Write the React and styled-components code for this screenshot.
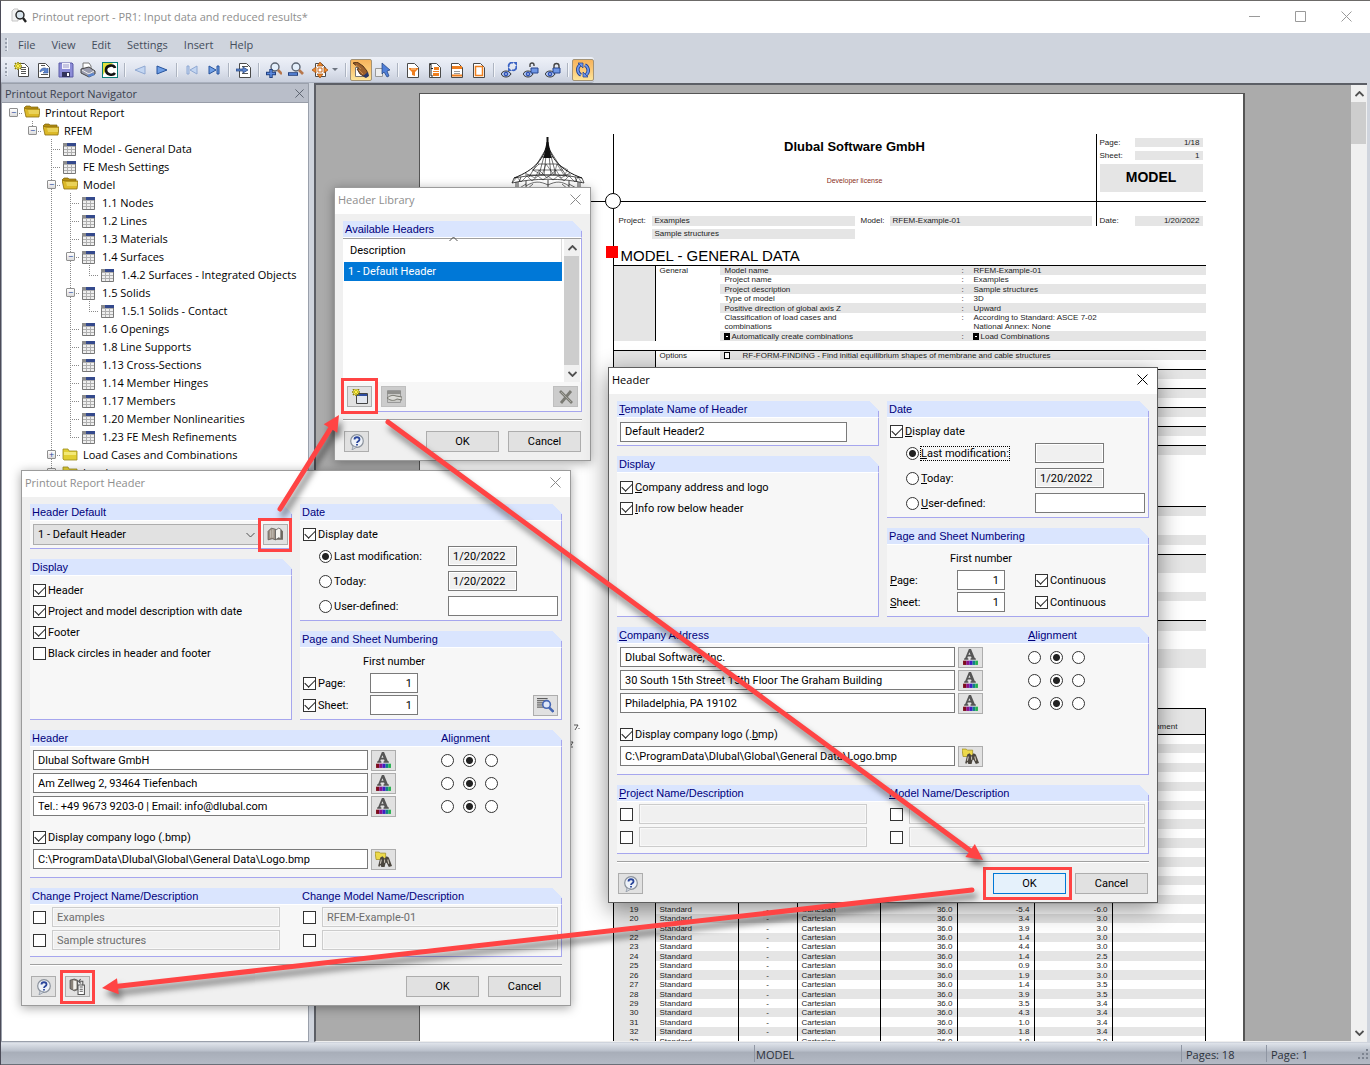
import React from "react";
import styled, { createGlobalStyle, css } from "styled-components";

const ui = '"Open Sans", "Noto Sans", sans-serif';
const form = 'Roboto, "Noto Sans", sans-serif';
const print = '"Liberation Sans", Arial, sans-serif';
const red = "#ff4444";

const tree = [
  { label: "Printout Report", icon: "open", cells: ["minus-root"] },
  { label: "RFEM", icon: "open", cells: ["", "minus-last"] },
  { label: "Model - General Data", icon: "table", cells: ["", "", "tee"] },
  { label: "FE Mesh Settings", icon: "table", cells: ["", "", "tee"] },
  { label: "Model", icon: "open", cells: ["", "", "minus"] },
  { label: "1.1 Nodes", icon: "table", cells: ["", "", "line", "tee"] },
  { label: "1.2 Lines", icon: "table", cells: ["", "", "line", "tee"] },
  { label: "1.3 Materials", icon: "table", cells: ["", "", "line", "tee"] },
  { label: "1.4 Surfaces", icon: "table", cells: ["", "", "line", "minus"] },
  {
    label: "1.4.2 Surfaces - Integrated Objects",
    icon: "table",
    cells: ["", "", "line", "line", "elbow"],
  },
  { label: "1.5 Solids", icon: "table", cells: ["", "", "line", "minus"] },
  {
    label: "1.5.1 Solids - Contact",
    icon: "table",
    cells: ["", "", "line", "line", "elbow"],
  },
  { label: "1.6 Openings", icon: "table", cells: ["", "", "line", "tee"] },
  { label: "1.8 Line Supports", icon: "table", cells: ["", "", "line", "tee"] },
  { label: "1.13 Cross-Sections", icon: "table", cells: ["", "", "line", "tee"] },
  { label: "1.14 Member Hinges", icon: "table", cells: ["", "", "line", "tee"] },
  { label: "1.17 Members", icon: "table", cells: ["", "", "line", "tee"] },
  {
    label: "1.20 Member Nonlinearities",
    icon: "table",
    cells: ["", "", "line", "tee"],
  },
  {
    label: "1.23 FE Mesh Refinements",
    icon: "table",
    cells: ["", "", "line", "elbow"],
  },
  { label: "Load Cases and Combinations", icon: "closed", cells: ["", "", "plus"] },
  { label: "Loads", icon: "closed", cells: ["", "", "plus"] },
];

const general = [
  ["Model name", ":", "RFEM-Example-01", true],
  ["Project name", ":", "Examples", false],
  ["Project description", ":", "Sample structures", true],
  ["Type of model", ":", "3D", false],
  ["Positive direction of global axis Z", ":", "Upward", true],
  ["Classification of load cases and", ":", "According to Standard: ASCE 7-02", false],
  ["combinations", "", "National Annex: None", false],
  ["Automatically create combinations", ":", "Load Combinations", true, true],
];

// height of each line block and whether it is shaded
const sections = [
  [[9, 1], [9, 0]],
  [[9, 1], [9, 0]],
  [[9, 1], [9, 0]],
  [[9, 1], [9, 0]],
  [[9, 1], [51, 0]],
  [[9, 1], [19, 0], [10, 1], [9, 0]],
  [[18, 1], [19, 0], [9, 1], [19, 0]],
  [[10, 1], [18, 0], [19, 1], [40, 0]],
];

const coords = {
  18: ["-5.4", "3.0"],
  19: ["-5.4", "-6.0"],
  20: ["3.4", "3.0"],
  21: ["3.9", "3.0"],
  22: ["1.4", "3.0"],
  23: ["4.4", "3.0"],
  24: ["1.4", "2.5"],
  25: ["0.9", "3.0"],
  26: ["1.9", "3.0"],
  27: ["1.4", "3.5"],
  28: ["3.9", "3.5"],
  29: ["3.5", "3.4"],
  30: ["4.3", "3.4"],
  31: ["1.0", "3.4"],
  32: ["1.8", "3.4"],
  33: ["1.8", "3.0"],
};
const nodes = Array.from({ length: 33 }, (_, i) => i + 1);

/* ---------- icons ---------- */

const Svg = ({ size = 16, children, ...rest }) => (
  <svg width={size} height={size} viewBox="0 0 16 16" aria-hidden="true" {...rest}>
    {children}
  </svg>
);

const Sheet = ({ x = 3, y = 1, w = 11, h = 14 }) => (
  <path
    d={`M${x} ${y}h${w - 4}l4 4v${h - 4}h-${w}z`}
    fill="#fff"
    stroke="#4a4a4a"
  />
);

const Spark = () => (
  <>
    <path
      d="M4 0v8M0 4h8M1 1l6 6M7 1L1 7"
      stroke="#8f8400"
      strokeWidth="1.6"
      fill="none"
    />
    <path
      d="M4 1v6M1 4h6M2 2l4 4M6 2L2 6"
      stroke="#fff04a"
      strokeWidth="1"
      fill="none"
    />
  </>
);

const Lens = () => (
  <>
    <circle cx="8" cy="5" r="4" fill="#e4effb" stroke="#5b6472" strokeWidth="1.4" />
    <path d="M11 8l4 4" stroke="#b7774c" strokeWidth="2.6" />
  </>
);

const Eye = () => (
  <>
    <path d="M0 12c2-4 8-4 10 0c-2 4-8 4-10 0z" fill="#a9c0ee" stroke="#333" />
    <circle cx="5" cy="12" r="2.2" fill="#2b4fb5" />
    <circle cx="5" cy="12" r=".8" fill="#fff" />
  </>
);

const Bars = ({ x = 5, ys = [5, 7, 9, 11], w = 7, color = "#555" }) =>
  ys.map((y) => <path key={y} d={`M${x} ${y + 0.5}h${w}`} stroke={color} />);

const icons = {
  app: (
    <Svg>
      <path d="M1 13V3l2-2h4v12z" fill="#f2f2f2" stroke="#c5c5c5" />
      <circle cx="9" cy="7" r="4" fill="#d8e4ec" stroke="#222" strokeWidth="1.4" />
      <path d="M12 10l3 4" stroke="#222" strokeWidth="2.4" />
    </Svg>
  ),
  create: (
    <Svg>
      <Sheet x={4.5} y={1.5} w={10} h={13} />
      <Bars x={7} w={5} />
      <Spark />
    </Svg>
  ),
  open: (
    <Svg>
      <Sheet x={2.5} y={1.5} />
      <Bars x={5} ys={[3]} w={4} />
      <Bars x={5} ys={[12]} />
      <path d="M4 10c0-4 5-5 7-3l1-1v5H7l2-2c-2-1-3 0-5 1z" fill="#5c86cf" stroke="#2d539b" strokeWidth=".6" />
    </Svg>
  ),
  save: (
    <Svg>
      <path d="M1 1h13l1 1v13H1z" fill="#8c8cd8" stroke="#5a5aa6" />
      <path d="M4 1h8v6H4z" fill="#f2f2fb" />
      <path d="M5 3h6M5 5h6" stroke="#9a9ac8" />
      <path d="M4 10h8v5H4z" fill="#33335c" />
      <path d="M9 11h2v3H9z" fill="#fff" />
    </Svg>
  ),
  print: (
    <Svg>
      <path d="M3 7V1h6l2 3v4z" fill="#fff" stroke="#777" />
      <path d="M1 7l8-2 6 4v3l-6 3-8-4z" fill="#9a9cae" stroke="#444" />
      <path d="M2 8l7 4 5-3" stroke="#eee" fill="none" />
      <path d="M7 13l6-2 2 2-6 2z" fill="#5c86cf" />
    </Svg>
  ),
  compare: (
    <Svg>
      <path d="M0 0h16v16H0z" fill="#0a7d76" />
      <path d="M1 1h14v14H1z" fill="#fff" />
      <path d="M1 1h10l-3 3-4 4-3 5z" fill="#e2e23a" />
      <path d="M13 6c-1-4-9-3-9 2s7 6 9 3" fill="none" stroke="#111" strokeWidth="2.6" />
    </Svg>
  ),
  back: (
    <Svg>
      <path d="M13 4v8L3 8z" fill="#c3d6f2" stroke="#8fa8d2" />
    </Svg>
  ),
  next: (
    <Svg>
      <path d="M3 4v8l10-4z" fill="#6f9fe6" stroke="#27539c" />
    </Svg>
  ),
  first: (
    <Svg>
      <path d="M3 4h2v8H3zM13 4v8L6 8z" fill="#c3d6f2" stroke="#8fa8d2" />
    </Svg>
  ),
  last: (
    <Svg>
      <path d="M11 4h2v8h-2zM3 4v8l7-4z" fill="#6f9fe6" stroke="#27539c" />
    </Svg>
  ),
  goto: (
    <Svg>
      <Sheet x={3.5} y={1.5} />
      <Bars x={6} ys={[4, 11]} w={6} />
      <path d="M0 7h7V5l5 3-5 3V9H0z" fill="#5c86cf" stroke="#1e3f7d" strokeWidth=".7" />
    </Svg>
  ),
  zoomIn: (
    <Svg>
      <g transform="translate(1 0)">
        <Lens />
      </g>
      <path d="M5 7v9M0 11.500h10" stroke="#22407f" strokeWidth="3.4" />
      <path d="M5 8v7M1 11.500h8" stroke="#5c8ae0" strokeWidth="1.6" />
    </Svg>
  ),
  zoomOut: (
    <Svg>
      <Lens />
      <path d="M0 12h10" stroke="#22407f" strokeWidth="3.600" />
      <path d="M1 12h8" stroke="#5c8ae0" strokeWidth="1.600" />
    </Svg>
  ),
  fit: (
    <Svg>
      <Sheet x={3.5} y={1.5} w={10} h={13} />
      <path d="M8 0l3 4H5zM8 16l3-4H5zM0 8l4-3v6zM16 8l-4-3v6z" fill="#f08a2c" stroke="#9c4a0c" strokeWidth=".7" />
      <path d="M6 6h4v4H6z" fill="none" stroke="#c96514" />
    </Svg>
  ),
  hand: (
    <Svg>
      <path d="M2.500 5.500h8v9h-8z" fill="#fff" stroke="#777" />
      <path d="M0 1l4-1 6 4 4 5 1 5-3 1-5-3-3-5 2-1z" fill="#9a5f2c" stroke="#3b200c" strokeWidth=".8" />
      <path d="M3 3l5 4M6 8l4 4" stroke="#c98d52" fill="none" />
      <path d="M10 14l5-4 1 4-3 2z" fill="#26386b" />
    </Svg>
  ),
  pick: (
    <Svg>
      <path d="M.5 6.500h7v8h-7z" fill="#eee" stroke="#999" />
      <path d="M7 1l8 7-3 1 2 5-2 1-3-5-2 2z" fill="#4f7fd8" stroke="#1e3f7d" strokeWidth=".7" />
    </Svg>
  ),
  filter: (
    <Svg>
      <Sheet x={2.5} y={1.5} />
      <path d="M4 6h9v1l-3 3v4l-3-1v-3L4 7z" fill="#ef7f1f" />
      <path d="M6 7h5" stroke="#ffd0a0" />
    </Svg>
  ),
  number: (
    <Svg>
      <Sheet x={2.5} y={1.5} />
      <path d="M3 3l1-1v12h2M4 6.500h2" stroke="#222" fill="none" />
      <path d="M7 5h5v3H7zM6 11h6v3H6z" fill="#ef7f1f" />
      <path d="M6 9.500h6" stroke="#ef7f1f" />
    </Svg>
  ),
  headerFooter: (
    <Svg>
      <Sheet x={2.5} y={1.5} />
      <path d="M3 4h10v3H3z" fill="#ef7f1f" />
      <path d="M5 9.500h6M5 11.500h6" stroke="#999" />
      <path d="M3 13.500h10" stroke="#ef7f1f" strokeWidth="2" />
    </Svg>
  ),
  frame: (
    <Svg>
      <Sheet x={2.5} y={1.5} />
      <path d="M4.500 4.500h7v9h-7z" fill="none" stroke="#ef7f1f" strokeWidth="1.500" />
    </Svg>
  ),
  eyeSync: (
    <Svg>
      <Eye />
      <path d="M8 5a3 3 0 0 1 4-4M15 4a3 3 0 0 1-4 4" fill="none" stroke="#3c64c4" strokeWidth="1.800" />
      <path d="M12 0h4v4zM11 9H7V5z" fill="#3c64c4" />
    </Svg>
  ),
  eyeOpen: (
    <Svg>
      <Eye />
      <path d="M8 6h7v5H8z" fill="#6f97e6" stroke="#27458f" />
      <path d="M7 5V3a2 2 0 0 1 4 0v1" fill="none" stroke="#444" strokeWidth="1.400" />
    </Svg>
  ),
  eyeLock: (
    <Svg>
      <Eye />
      <path d="M8 6h7v5H8z" fill="#6f97e6" stroke="#27458f" />
      <path d="M9 6V4a2 2 0 0 1 5 0v2" fill="none" stroke="#444" strokeWidth="1.400" />
    </Svg>
  ),
  refresh: (
    <Svg>
      <path d="M6 13a6 6 0 0 1-1-10M10 3a6 6 0 0 1 1 10" fill="none" stroke="#1f3c8c" strokeWidth="3.400" />
      <path d="M6 13a6 6 0 0 1-1-10M10 3a6 6 0 0 1 1 10" fill="none" stroke="#6f99ee" strokeWidth="1.700" />
      <path d="M3 1h5v5zM13 15H8v-5z" fill="#6f99ee" stroke="#1f3c8c" strokeWidth=".7" />
    </Svg>
  ),
  folderOpen: (
    <Svg>
      <path d="M0 4l2-2h4l1 1h7v4H2z" fill="#b58e12" stroke="#7d6410" strokeWidth=".7" />
      <path d="M2 13L0 4l3 1h13l-1 8z" fill="#dcb928" stroke="#8a6d10" strokeWidth=".8" />
      <path d="M4 6h11v4H5z" fill="#f4e27a" opacity=".6" />
    </Svg>
  ),
  folderClosed: (
    <Svg>
      <path d="M1 3h5l1 2h8v9H2l-1-1z" fill="#e2cf34" stroke="#9a8a1c" strokeWidth=".8" />
      <path d="M2 6h12v3H2z" fill="#f7ef8a" opacity=".8" />
    </Svg>
  ),
  sheetTable: (
    <Svg size={13} viewBox="0 0 13 13">
      <path d="M0 0h13v13H0z" fill="#efefef" />
      <path d="M0 3.500h13M0 6.500h13M0 9.500h13M4.500 3v10M8.500 3v10" stroke="#b0b0b0" fill="none" />
      <path d="M.5 .5h12v12H.5z" stroke="#777" fill="none" />
      <path d="M0 0h4v3H0z" fill="#8c8c8c" />
      <path d="M4 0h9v3H4z" fill="#34498c" />
    </Svg>
  ),
  help: (
    <Svg>
      <circle cx="8" cy="7" r="6.300" fill="#eef2f8" stroke="#8b929c" strokeWidth="1.200" />
      <path d="M4 12l-1 4 5-3z" fill="#cfd4dc" stroke="#808a98" strokeWidth=".6" />
      <path d="M5.500 5.500c0-3 5-3 5 0c0 2-2.500 1.500-2.500 3.500M8 10v1.600" fill="none" stroke="#29459a" strokeWidth="1.800" />
    </Svg>
  ),
  newItem: (
    <Svg>
      <path d="M4.500 4.500h11v10h-11z" fill="#e3e7ef" stroke="#444" />
      <path d="M5 5h10v2H5z" fill="#2f4da0" />
      <g transform="translate(0 -1)">
        <Spark />
      </g>
    </Svg>
  ),
  rename: (
    <Svg>
      <path d="M1.500 1.500h13v12h-13z" fill="#c9c9c6" stroke="#999" />
      <path d="M1 2h14v3H1z" fill="#8f8f8c" />
      <path d="M1 9c4-3 6-3 9-2l6 1v3l-5-1c-3 2-6 2-10-1z" fill="#dcdcd8" stroke="#77776f" />
    </Svg>
  ),
  remove: (
    <Svg>
      <path d="M2 2l12 12M13 2L3 14" stroke="#7b7b74" strokeWidth="2.800" />
      <path d="M3 3l10 10" stroke="#a8a8a0" />
    </Svg>
  ),
  book: (
    <Svg size={17}>
      <path d="M1 13V5l3-3 4 1v10l-3-1z" fill="#9c9084" stroke="#5a534c" strokeWidth=".7" />
      <path d="M8 13V4l3-2 2 1v9l-2-1z" fill="#f7f5f0" stroke="#555" strokeWidth=".7" />
      <path d="M13 3l2 2v8H8l3-2 2 1z" fill="#6e675f" />
      <path d="M3.500 4v7M5.500 3v8" stroke="#c9c2b9" />
    </Svg>
  ),
  details: (
    <Svg size={17}>
      <Bars x={0} ys={[1, 3, 5, 7, 9]} w={10} />
      <circle cx="9" cy="7" r="3.600" fill="#dfe8f8" stroke="#4667b4" strokeWidth="1.500" />
      <path d="M11.500 10l4 4" stroke="#4667b4" strokeWidth="2.400" />
    </Svg>
  ),
  font: (
    <Svg size={17}>
      <path d="M2 10V9l1-.5L6.500 0h2L12 8.500l1 .5v1H8V9l1-.5L8.500 7h-3L5 8.500 6 9v1zM6 5.500h2L7 3z" fill="#555" />
      <path d="M1 11h3v4H1z" fill="#7d0c1c" />
      <path d="M4 11h3v4H4z" fill="#8a128a" />
      <path d="M7 11h3v4H7z" fill="#3f1ec4" />
      <path d="M10 11h2.500v4H10z" fill="#0f7f8a" />
      <path d="M12.500 11H15v4h-2.500z" fill="#22b04c" />
    </Svg>
  ),
  browse: (
    <Svg size={17}>
      <path d="M0 1h4l1 1h5v6H1z" fill="#ecd94a" stroke="#a08d1e" strokeWidth=".7" />
      <path d="M3 14l2-8 2-1 2 2 2-2 2 1 3 8-3 1-2-4h-1l-1 4H6l-1-2-1 2z" fill="#4b463e" />
      <path d="M6 8l-1 4M12 8l1 4M9 8v3" stroke="#c9c2b4" />
    </Svg>
  ),
  paste: (
    <Svg size={17}>
      <path d="M1 2l4-1 3 1v9l-3 1-4-2z" fill="#8a8278" stroke="#444" strokeWidth=".7" />
      <path d="M4 2v9l3-1V3z" fill="#f3f1ec" />
      <path d="M8.500 6.500h6v9h-6z" fill="#fff" stroke="#555" />
      <path d="M10 8.500h3M10 10.500h3M10 12.500h3" stroke="#555" />
      <path d="M10 3h3v4M11 1L9 3l2 2" fill="none" stroke="#555" />
    </Svg>
  ),
};

const Cross = ({ size = 11, color = "#8a8a8a" }) => (
  <svg width={size} height={size} viewBox="0 0 11 11" aria-hidden="true">
    <path d="M.5 .5l10 10M10.500 .5l-10 10" stroke={color} fill="none" />
  </svg>
);

const Chevron = ({ down, size = 9, color = "#505050", width = 1.8 }) => (
  <svg width={size} height={6} viewBox="0 0 9 6" aria-hidden="true">
    <path
      d={down ? "M.5 1l4 4 4-4" : "M.5 5l4-4 4 4"}
      stroke={color}
      strokeWidth={width}
      fill="none"
    />
  </svg>
);

/* ---------- report page ---------- */

const TentLogo = () => (
  <svg width="74" height="64" viewBox="0 0 74 64" aria-hidden="true">
    <g fill="none" stroke="#111">
      <path d="M36.500 0v14" strokeWidth="2" />
      <path d="M36 5c-2 16-12 28-33 36M37 5c2 16 12 28 34 36" strokeWidth="1" />
      <path d="M36 8l-8 30M36 8l-3 30M37 8l3 30M37 8l8 30M35 12L18 40M38 12l18 28" strokeWidth=".6" />
      <path d="M31 20h11M27 27h19M21 33h31M14 38h46" strokeWidth=".6" />
      <path d="M28 27l-6 6 9 5 4-11 8 11 3-11 7 11 4-5-11-6M14 36l10 5 4-8 8 8 9-8 5 8 9-5" strokeWidth=".5" />
      <path d="M3 41c20-4 48-4 68 0M1 46c20-5 52-5 72 0M3 41l-2 5M71 41l2 5M10 40l-2 5M64 40l2 5" strokeWidth=".7" />
      <path d="M1 46l5-6 4 5 6-6 5 5 6-5 5 4 5-4 5 4 5-4 6 5 5-5 6 6 3-5 4 6" strokeWidth=".5" />
      <path d="M5 45v18M7 45v18M15 44v19M37 43v20M58 44v19M67 45v18M69 45v18" strokeWidth=".8" />
      <path d="M15 49c8-5 14-5 22-1 8-4 14-4 21 1M7 52l8-5M67 52l-9-5M15 53l7-6M58 53l-7-6" strokeWidth=".6" />
    </g>
    <path d="M36.500 4l4 17h-8z" fill="#111" />
  </svg>
);

const PrintPage = () => (
  <Paper>
    <PaperMargin>
      <LogoCell>
        <TentLogo />
      </LogoCell>
      <PlotTrace width="12" height="28" viewBox="0 0 12 28" aria-hidden="true">
        <path d="M1 4l1 1M5 2h4l-3 5M10 5v1M1 19h3l-3 5h3" stroke="#333" fill="none" strokeWidth=".8" />
      </PlotTrace>
    </PaperMargin>
    <PaperContent>
      <Joint width="18" height="18" viewBox="0 0 18 18" aria-hidden="true">
        <circle cx="9" cy="9" r="7.500" fill="#fff" stroke="#000" />
      </Joint>
      <RedMark />
      <Letterhead>
        <Company>
          <h1>Dlubal Software GmbH</h1>
          <p>Developer license</p>
        </Company>
        <PageInfo>
          <span>Page:</span>
          <Value $right>1/18</Value>
          <span>Sheet:</span>
          <Value $right>1</Value>
          <ModelTag>MODEL</ModelTag>
        </PageInfo>
      </Letterhead>
      <ProjectInfo>
        <span>Project:</span>
        <Value>Examples</Value>
        <span>Model:</span>
        <Value>RFEM-Example-01</Value>
        <DateCell>
          <span>Date:</span>
          <Value $right>1/20/2022</Value>
        </DateCell>
        <span />
        <Value>Sample structures</Value>
      </ProjectInfo>
      <PaperTitle>MODEL - GENERAL DATA</PaperTitle>

      <DataTable>
        <colgroup>
          <col width="42" />
          <col width="64" />
          <col width="242" />
          <col width="7" />
          <col />
        </colgroup>
        <tbody>
          {general.map(([name, colon, value, shaded, ticked], i) => (
            <DataRow key={name} $shaded={shaded}>
              <td />
              <td>{i === 0 ? "General" : ""}</td>
              <td>
                {ticked && <PrintBox $full />}
                {name}
              </td>
              <td>{colon}</td>
              <td>
                {ticked && <PrintBox $full />}
                {value}
              </td>
            </DataRow>
          ))}
          <GapRow>
            <td colSpan={5} />
          </GapRow>
        </tbody>
      </DataTable>

      <DataTable>
        <colgroup>
          <col width="42" />
          <col width="64" />
          <col />
        </colgroup>
        <tbody>
          <DataRow $shaded>
            <td />
            <td>Options</td>
            <td>
              <PrintBox />
              <OptionText>
                RF-FORM-FINDING - Find initial equilibrium shapes of membrane and
                cable structures
              </OptionText>
            </td>
          </DataRow>
          <DataRow>
            <td />
            <td />
            <td />
          </DataRow>
        </tbody>
      </DataTable>

      {sections.map((rows, i) => (
        <Section key={i}>
          {rows.map(([height, shaded], j) => (
            <SectionLine key={j} $height={height} $shaded={shaded} />
          ))}
        </Section>
      ))}

      <NodeTable>
        <colgroup>
          <col width="42" />
          <col width="83" />
          <col width="59" />
          <col width="83" />
          <col width="77" />
          <col width="77" />
          <col width="78" />
          <col />
        </colgroup>
        <thead>
          <tr>
            <th colSpan={7} />
            <th>Comment</th>
          </tr>
        </thead>
        <tbody>
          {nodes.map((n) => {
            const [y, z] = coords[n] || [];
            return (
              <tr key={n}>
                <td>{y && n}</td>
                <td>{y && "Standard"}</td>
                <td>{y && "-"}</td>
                <td>{y && "Cartesian"}</td>
                <td>{y && "36.0"}</td>
                <td>{y}</td>
                <td>{z}</td>
                <td />
              </tr>
            );
          })}
        </tbody>
      </NodeTable>
    </PaperContent>
  </Paper>
);

/* ---------- dialogs ---------- */

const Check = ({ children, ...rest }) => (
  <Label>
    <Tick type="checkbox" {...rest} />
    {children && <span>{children}</span>}
  </Label>
);

const Choice = ({ children, focused, ...rest }) => (
  <Label>
    <Dot type="radio" {...rest} />
    {children && <Caption $focused={focused}>{children}</Caption>}
  </Label>
);

const Dialog = ({ title, active, left, top, width, children }) => (
  <Window $left={left} $top={top} $width={width} $active={active} role="dialog" aria-label={title}>
    <WindowBar $active={active}>
      <span>{title}</span>
      <CloseButton type="button" aria-label="Close">
        <Cross color={active ? "#000" : "#8a8a8a"} />
      </CloseButton>
    </WindowBar>
    <WindowBody>{children}</WindowBody>
  </Window>
);

const Group = ({ title, second, split, grow, children }) => (
  <GroupBox $grow={grow}>
    <GroupTitle $split={split}>
      <span>{title}</span>
      {second && <span>{second}</span>}
    </GroupTitle>
    <GroupBody>{children}</GroupBody>
  </GroupBox>
);

const DateGroup = ({ name, lastDate, keys }) => (
  <Group title="Date">
    <DateFields>
      <Wide>
        <Check defaultChecked>
          {keys ? <><u>D</u>isplay date</> : "Display date"}
        </Check>
      </Wide>
      <Choice name={name} defaultChecked focused={keys}>
        {keys ? <><u>L</u>ast modification:</> : "Last modification:"}
      </Choice>
      <Field $short $locked readOnly defaultValue={lastDate} aria-label="Last modification date" />
      <Choice name={name}>{keys ? <><u>T</u>oday:</> : "Today:"}</Choice>
      <Field $short $locked readOnly defaultValue="1/20/2022" aria-label="Today's date" />
      <Choice name={name}>
        {keys ? <><u>U</u>ser-defined:</> : "User-defined:"}
      </Choice>
      <Field aria-label="User-defined date" />
    </DateFields>
  </Group>
);

const AddressGroup = ({ title, second, name, lines, logoLabel }) => (
  <Group title={title} second={second} split={409}>
    <AddressLines>
      {lines.map((line, i) => (
        <AddressRow key={line}>
          <Field defaultValue={line} aria-label={`Line ${i + 1}`} />
          <RowTools>
            <IconButton type="button" aria-label="Font">
              {icons.font}
            </IconButton>
            <Alignments>
              {["left", "center", "right"].map((side) => (
                <Dot
                  key={side}
                  type="radio"
                  name={`${name}-${i}`}
                  aria-label={side}
                  defaultChecked={side === "center"}
                />
              ))}
            </Alignments>
          </RowTools>
        </AddressRow>
      ))}
      <LogoCheck>
        <Check defaultChecked>{logoLabel}</Check>
      </LogoCheck>
      <AddressRow>
        <Field
          defaultValue="C:\ProgramData\Dlubal\Global\General Data\Logo.bmp"
          aria-label="Logo file"
        />
        <RowTools>
          <IconButton type="button" aria-label="Browse">
            {icons.browse}
          </IconButton>
        </RowTools>
      </AddressRow>
    </AddressLines>
  </Group>
);

const NamesGroup = ({ title, second, values }) => (
  <Group title={title} second={second} split={270}>
    <NameRows>
      {values.map(([project, model], i) => (
        <NameRow key={i}>
          <NamePair $fixed>
            <Tick type="checkbox" aria-label={`Project text ${i + 1}`} />
            <Field disabled defaultValue={project} aria-label="Project" />
          </NamePair>
          <NamePair>
            <Tick type="checkbox" aria-label={`Model text ${i + 1}`} />
            <Field disabled defaultValue={model} aria-label="Model" />
          </NamePair>
        </NameRow>
      ))}
    </NameRows>
  </Group>
);

const HeaderLibrary = () => (
  <Dialog title="Header Library" left={334} top={187} width={257}>
    <Group title="Available Headers">
      <ListArea>
        <HeaderList>
          <thead>
            <tr>
              <th>
                <SortMark>
                  <Chevron width={1} />
                </SortMark>
                Description
              </th>
            </tr>
          </thead>
          <tbody>
            <tr>
              <td>1 - Default Header</td>
            </tr>
          </tbody>
        </HeaderList>
        <ScrollTrack>
          <ScrollButton type="button" aria-label="Up">
            <Chevron />
          </ScrollButton>
          <Thumb />
          <ScrollButton type="button" aria-label="Down">
            <Chevron down />
          </ScrollButton>
        </ScrollTrack>
      </ListArea>
      <ListTools>
        <IconButton type="button" aria-label="New header">
          {icons.newItem}
        </IconButton>
        <IconButton type="button" aria-label="Rename" $muted>
          {icons.rename}
        </IconButton>
        <Push />
        <IconButton type="button" aria-label="Delete" $muted>
          {icons.remove}
        </IconButton>
      </ListTools>
    </Group>
    <Footer>
      <IconButton type="button" aria-label="Help">
        {icons.help}
      </IconButton>
      <Push />
      <PushButton type="button">OK</PushButton>
      <PushButton type="button">Cancel</PushButton>
    </Footer>
  </Dialog>
);

const ReportHeader = () => (
  <Dialog title="Printout Report Header" left={21} top={470} width={550}>
    <Columns>
      <Column>
        <Group title="Header Default">
          <SelectRow>
            <SelectBox>
              <select aria-label="Header Default">
                <option>1 - Default Header</option>
              </select>
              <Chevron down width={1} />
            </SelectBox>
            <IconButton type="button" aria-label="Library">
              {icons.book}
            </IconButton>
          </SelectRow>
        </Group>
        <Group title="Display" grow>
          <CheckList>
            <Check defaultChecked>Header</Check>
            <Check defaultChecked>Project and model description with date</Check>
            <Check defaultChecked>Footer</Check>
            <Check>Black circles in header and footer</Check>
          </CheckList>
        </Group>
      </Column>
      <Column>
        <DateGroup name="report-date" lastDate="1/20/2022" />
        <Group title="Page and Sheet Numbering" grow>
          <Numbering>
            <First>First number</First>
            <Check defaultChecked>Page:</Check>
            <Field $number defaultValue="1" aria-label="First page number" />
            <span />
            <Check defaultChecked>Sheet:</Check>
            <Field $number defaultValue="1" aria-label="First sheet number" />
            <EndCell>
              <IconButton type="button" aria-label="Details">
                {icons.details}
              </IconButton>
            </EndCell>
          </Numbering>
        </Group>
      </Column>
    </Columns>
    <AddressGroup
      title="Header"
      second="Alignment"
      name="report-align"
      lines={[
        "Dlubal Software GmbH",
        "Am Zellweg 2, 93464 Tiefenbach",
        "Tel.: +49 9673 9203-0 | Email: info@dlubal.com",
      ]}
      logoLabel="Display company logo (.bmp)"
    />
    <NamesGroup
      title="Change Project Name/Description"
      second="Change Model Name/Description"
      values={[
        ["Examples", "RFEM-Example-01"],
        ["Sample structures", ""],
      ]}
    />
    <Footer>
      <IconButton type="button" aria-label="Help">
        {icons.help}
      </IconButton>
      <IconButton type="button" aria-label="Save as default">
        {icons.paste}
      </IconButton>
      <Push />
      <PushButton type="button">OK</PushButton>
      <PushButton type="button">Cancel</PushButton>
    </Footer>
  </Dialog>
);

const NewHeader = () => (
  <Dialog title="Header" active left={608} top={367} width={550}>
    <Columns>
      <Column>
        <Group title={<><u>T</u>emplate Name of Header</>}>
          <SelectRow>
            <Field $name defaultValue="Default Header2" aria-label="Template name" />
          </SelectRow>
        </Group>
        <Group title="Display" grow>
          <CheckList>
            <Check defaultChecked>
              <u>C</u>ompany address and logo
            </Check>
            <Check defaultChecked>
              <u>I</u>nfo row below header
            </Check>
          </CheckList>
        </Group>
      </Column>
      <Column>
        <DateGroup name="new-date" lastDate="" keys />
        <Group title="Page and Sheet Numbering" grow>
          <Numbering>
            <First>First number</First>
            <label htmlFor="new-page">
              <u>P</u>age:
            </label>
            <Field $number id="new-page" defaultValue="1" />
            <Continuous>
              <Check defaultChecked>Continuous</Check>
            </Continuous>
            <label htmlFor="new-sheet">
              <u>S</u>heet:
            </label>
            <Field $number id="new-sheet" defaultValue="1" />
            <Continuous>
              <Check defaultChecked>Continuous</Check>
            </Continuous>
          </Numbering>
        </Group>
      </Column>
    </Columns>
    <AddressGroup
      title={<><u>C</u>ompany Address</>}
      second={<><u>A</u>lignment</>}
      name="new-align"
      lines={[
        "Dlubal Software, Inc.",
        "30 South 15th Street 15th Floor The Graham Building",
        "Philadelphia, PA 19102",
      ]}
      logoLabel={<>Display company logo (.<u>b</u>mp)</>}
    />
    <NamesGroup
      title={<><u>P</u>roject Name/Description</>}
      second={<><u>M</u>odel Name/Description</>}
      values={[
        ["", ""],
        ["", ""],
      ]}
    />
    <Footer>
      <IconButton type="button" aria-label="Help">
        {icons.help}
      </IconButton>
      <Push />
      <PushButton type="button" $primary>
        OK
      </PushButton>
      <PushButton type="button">Cancel</PushButton>
    </Footer>
  </Dialog>
);

/* ---------- callouts ---------- */

const Arrow = ({ from, to }) => {
  const [x1, y1] = from;
  const [x2, y2] = to;
  const len = Math.hypot(x2 - x1, y2 - y1);
  const ux = (x2 - x1) / len;
  const uy = (y2 - y1) / len;
  const bx = x2 - ux * 16;
  const by = y2 - uy * 16;
  return (
    <g>
      <path d={`M${x1} ${y1}L${bx} ${by}`} stroke={red} strokeWidth="5" strokeLinecap="round" />
      <path
        d={`M${x2} ${y2}L${bx - uy * 8} ${by + ux * 8}L${bx + uy * 8} ${by - ux * 8}z`}
        fill={red}
      />
    </g>
  );
};

const Frame = ({ x, y, w, h }) => (
  <rect x={x} y={y} width={w} height={h} fill="none" stroke={red} strokeWidth="3" />
);

const Callouts = () => (
  <Overlay aria-hidden="true">
    <Frame x={259.5} y={519.5} w={31} h={31} />
    <Frame x={342.5} y={379.5} w={34} h={33} />
    <Frame x={984.5} y={868.5} w={86} h={30} />
    <Frame x={61.5} y={971.5} w={32} h={31} />
    <Shadowed>
      <Arrow from={[280, 509]} to={[339, 415]} />
      <Arrow from={[388, 422]} to={[983, 860]} />
      <Arrow from={[972, 890]} to={[102, 988]} />
    </Shadowed>
  </Overlay>
);

/* ---------- main window ---------- */

const toolbar = [
  ["create", "open", "save", "print", "compare"],
  ["back", "next"],
  ["first", "last"],
  ["goto"],
  ["zoomIn", "zoomOut", "fit"],
  ["hand", "pick"],
  ["filter", "number", "headerFooter", "frame"],
  ["eyeSync", "eyeOpen", "eyeLock"],
  ["refresh"],
];

const rowIcons = {
  open: icons.folderOpen,
  closed: icons.folderClosed,
  table: icons.sheetTable,
};

export default function App() {
  return (
    <Shell>
      <GlobalStyle />
      <TitleBar>
        {icons.app}
        <span>Printout report - PR1: Input data and reduced results*</span>
        <Push />
        <SystemButton type="button" aria-label="Minimize">
          <svg width="11" height="11" viewBox="0 0 11 11">
            <path d="M0 5.500h11" stroke="#9a9a9a" />
          </svg>
        </SystemButton>
        <SystemButton type="button" aria-label="Maximize">
          <svg width="11" height="11" viewBox="0 0 11 11">
            <path d="M.5 .5h10v10H.5z" stroke="#9a9a9a" fill="none" />
          </svg>
        </SystemButton>
        <SystemButton type="button" aria-label="Close">
          <Cross color="#9a9a9a" />
        </SystemButton>
      </TitleBar>
      <MenuBar>
        <Grip />
        {["File", "View", "Edit", "Settings", "Insert", "Help"].map((item) => (
          <MenuItem type="button" key={item}>
            {item}
          </MenuItem>
        ))}
      </MenuBar>
      <ToolRow>
        <ToolStrip>
          <Grip />
          {toolbar.map((set, i) => (
            <React.Fragment key={set[0]}>
              {i > 0 && <Divider />}
              {set.map((name) => (
                <Tool
                  type="button"
                  key={name}
                  aria-label={name}
                  $on={name === "hand" || name === "refresh"}
                  $menu={name === "fit"}
                >
                  {icons[name]}
                  {name === "fit" && <Caret />}
                </Tool>
              ))}
            </React.Fragment>
          ))}
        </ToolStrip>
      </ToolRow>

      <Workspace>
        <Navigator>
          <NavTitle>
            <span>Printout Report Navigator</span>
            <CloseButton type="button" aria-label="Close navigator">
              <Cross size={9} color="#4c5360" />
            </CloseButton>
          </NavTitle>
          <Tree>
            {tree.map((node) => (
              <TreeRow key={node.label}>
                {node.cells.map((kind, i) => (
                  <Guide key={i} $kind={kind}>
                    {/minus|plus/.test(kind) && (
                      <Expander type="button" aria-label={`Toggle ${node.label}`}>
                        {kind === "plus" ? "+" : "−"}
                      </Expander>
                    )}
                  </Guide>
                ))}
                <TreeIcon $low={node.icon === "table"}>{rowIcons[node.icon]}</TreeIcon>
                <span>{node.label}</span>
              </TreeRow>
            ))}
          </Tree>
        </Navigator>
        <Viewer>
          <Stage>
            <PrintPage />
          </Stage>
          <ScrollTrack>
            <ScrollButton type="button" aria-label="Scroll up">
              <Chevron />
            </ScrollButton>
            <Thumb $height={42} />
            <Push />
            <ScrollButton type="button" aria-label="Scroll down">
              <Chevron down />
            </ScrollButton>
          </ScrollTrack>
        </Viewer>
      </Workspace>

      <StatusBar>
        <span />
        <StatusCell>MODEL</StatusCell>
        <StatusCell>Pages: 18</StatusCell>
        <StatusCell>
          Page: 1
          <Push />
          <svg width="11" height="11" viewBox="0 0 11 11" aria-hidden="true">
            <path d="M8 0h2v2H8zM4 4h2v2H4zM8 4h2v2H8zM0 8h2v2H0zM4 8h2v2H4zM8 8h2v2H8z" fill="#7d8490" />
          </svg>
        </StatusCell>
      </StatusBar>

      <HeaderLibrary />
      <ReportHeader />
      <NewHeader />
      <Callouts />
    </Shell>
  );
}

/* ---------- styles ---------- */

const GlobalStyle = createGlobalStyle`
  * {
    box-sizing: border-box;
  }

  body {
    margin: 0;
    overflow: hidden;
  }

  button {
    margin: 0;
    padding: 0;
    border: none;
    background: none;
    font: inherit;
    color: inherit;
  }
`;

const Shell = styled.div`
  position: relative;
  display: flex;
  flex-direction: column;
  height: 100vh;
  background: #cfd4dd;
  border-top: 1px solid #6c6a68;
  border-left: 1px solid #4b4b58;
  font-family: ${ui};
  font-size: 11px;
  color: #000;
  overflow: hidden;
`;

const Push = styled.span`
  flex: 1;
`;

const TitleBar = styled.header`
  display: flex;
  align-items: center;
  gap: 5px;
  flex: none;
  height: 32px;
  padding: 0 3px 2px 10px;
  background: #fff;
  color: #8e8e8e;
`;

const SystemButton = styled.button`
  display: flex;
  align-items: center;
  justify-content: center;
  width: 41px;
  height: 30px;
`;

const MenuBar = styled.nav`
  display: flex;
  align-items: center;
  flex: none;
  height: 24px;
  padding: 0 0 2px 4px;
  color: #444d5c;
`;

const MenuItem = styled.button`
  padding: 0 8px;
`;

const Grip = styled.span`
  width: 3px;
  height: 13px;
  margin-right: 2px;
  background: repeating-linear-gradient(#9aa1ae 0 2px, transparent 2px 4px);
  border-right: 1px solid #e9edf4;
`;

const ToolRow = styled.div`
  display: flex;
  flex: none;
  height: 26px;
`;

const ToolStrip = styled.div`
  display: flex;
  align-items: center;
  padding-left: 4px;
  background: linear-gradient(#eef1f8, #dfe4ef 50%, #c9cfdc);
  border-bottom: 1px solid #a9b0be;
  border-radius: 0 3px 3px 0;

  ${Grip} {
    margin-right: 3px;
  }
`;

const Tool = styled.button`
  display: flex;
  align-items: center;
  justify-content: center;
  gap: 4px;
  width: ${({ $menu }) => ($menu ? 35 : 22)}px;
  height: 22px;
  ${({ $on }) =>
    $on &&
    css`
      background: linear-gradient(#f7b45c, #fbc977 50%, #fde59a);
      border: 1px solid #a39376;
      border-radius: 2px;
    `}
`;

const Caret = styled.span`
  border: 3px solid transparent;
  border-top-color: #6d7480;
  border-bottom: none;
`;

const Divider = styled.span`
  width: 2px;
  height: 14px;
  margin: 0 3px;
  background: #adb4c1;
  border-right: 1px solid #f4f6fa;
`;

const Workspace = styled.main`
  display: flex;
  gap: 5px;
  flex: 1;
  min-height: 0;
`;

const Navigator = styled.aside`
  display: flex;
  flex-direction: column;
  flex: none;
  width: 308px;
  background: #fff;
  border: 1px solid #9aa0ab;
`;

const NavTitle = styled.div`
  display: flex;
  align-items: center;
  justify-content: space-between;
  flex: none;
  height: 19px;
  padding: 0 0 0 3px;
  background: #b9bec9;
  border-bottom: 1px solid #989da8;
  color: #3c4350;
`;

const CloseButton = styled.button`
  display: flex;
  align-items: center;
  justify-content: center;
  width: 18px;
  height: 18px;
`;

const Tree = styled.div`
  display: flex;
  flex-direction: column;
  padding-left: 2px;
  overflow: hidden;
`;

const TreeRow = styled.div`
  display: flex;
  align-items: center;
  flex: none;
  height: 18px;
  white-space: nowrap;
`;

const dotsDown = "repeating-linear-gradient(#8a8a8a 0 1px, transparent 1px 2px)";
const dotsRight =
  "repeating-linear-gradient(to right, #8a8a8a 0 1px, transparent 1px 2px)";

const Guide = styled.span`
  display: flex;
  align-items: center;
  justify-content: center;
  width: 19px;
  height: 18px;
  padding-top: 1px;
  background-repeat: no-repeat;
  background-position: 9px 0, 9px 10px;
  background-image: ${({ $kind }) =>
    $kind === "" ? "none" : $kind === "line" ? dotsDown : `${dotsDown}, ${dotsRight}`};
  background-size: ${({ $kind }) =>
    $kind === "minus-root"
      ? "0 0, 10px 1px"
      : $kind === "elbow" || $kind === "minus-last"
        ? "1px 10px, 10px 1px"
        : "1px 18px, 10px 1px"};
`;

const Expander = styled.button`
  width: 9px;
  height: 9px;
  border: 1px solid #8f8f8f;
  border-radius: 1px;
  background: linear-gradient(#fff, #dcdcdc);
  color: #24439c;
  font-size: 9px;
  line-height: 7px;
`;

const TreeIcon = styled.span`
  display: flex;
  align-items: center;
  justify-content: center;
  width: 17px;
  margin-right: 5px;
  padding-top: ${({ $low }) => ($low ? 3 : 0)}px;
`;

const Viewer = styled.section`
  display: flex;
  flex: 1;
  min-width: 0;
  margin-right: 3px;
  background: #ababab;
  border: 2px solid #5c5f66;
  border-right: none;
  border-bottom: 1px solid #eee;
  overflow: hidden;
`;

const Stage = styled.div`
  display: flex;
  justify-content: center;
  align-items: flex-start;
  flex: 1;
  padding: 8px 4px 0 0;
`;

const Paper = styled.article`
  display: flex;
  width: 826px;
  padding-top: 40px;
  background: #fff;
  border: 1px solid #555;
  border-right-width: 2px;
  font-family: ${print};
  font-size: 8px;
  line-height: 9px;
  color: #1c1c1c;
`;

const PaperMargin = styled.div`
  width: 193px;
  flex: none;
`;

const LogoCell = styled.div`
  height: 68px;
  margin-left: 85px;
  padding: 3px 0 0 6px;
  border-bottom: 1px solid #000;
`;

const PlotTrace = styled.svg`
  margin: 521px 0 0 149px;
`;

const PaperContent = styled.div`
  position: relative;
  flex: 1;
  margin-right: 37px;
  border-left: 1px solid #000;
`;

const Joint = styled.svg`
  position: absolute;
  left: -10px;
  top: 58px;
`;

const RedMark = styled.span`
  position: absolute;
  left: -8px;
  top: 112px;
  width: 12px;
  height: 12px;
  background: #f00;
`;

const Letterhead = styled.div`
  display: grid;
  grid-template-columns: 1fr 110px;
  height: 68px;
  border-bottom: 1px solid #000;
`;

const Company = styled.div`
  text-align: center;

  h1 {
    margin: 4px 0 21px;
    font-size: 13px;
    line-height: 17px;
    color: #000;
  }

  p {
    margin: 0;
    font-size: 7px;
    color: #8a2f1c;
  }
`;

const Value = styled.span`
  padding: 0 3px;
  background: #e5e5e5;
  text-align: ${({ $right }) => ($right ? "right" : "left")};
`;

const PageInfo = styled.div`
  display: grid;
  grid-template-columns: 35px 1fr;
  grid-template-rows: 9px 9px 28px;
  row-gap: 4px;
  padding: 4px 3px 0;
  border-left: 1px solid #000;
`;

const ModelTag = styled.strong`
  grid-column: 1 / 3;
  background: #e5e5e5;
  font-size: 14px;
  line-height: 26px;
  text-align: center;
  color: #000;
`;

const DateCell = styled.span`
  display: grid;
  grid-template-columns: 35px 1fr;
  margin-top: -14px;
  padding: 14px 3px 0;
  border-left: 1px solid #000;
`;

const ProjectInfo = styled.div`
  display: grid;
  grid-template-columns: 33px 203px 35px 1fr 110px;
  grid-template-rows: 10px 10px;
  row-gap: 3px;
  padding: 14px 0 0 5px;
  line-height: 10px;

  span:nth-child(3) {
    padding-left: 6px;
  }

  & > span:nth-child(4) {
    margin-right: 4px;
  }
`;

const PaperTitle = styled.h2`
  margin: 7px 0 0 7px;
  font-size: 15px;
  font-weight: normal;
  line-height: 19px;
  color: #000;
`;

const DataTable = styled.table`
  width: 100%;
  table-layout: fixed;
  border-collapse: separate;
  border-spacing: 0;
  border-top: 1px solid #000;
`;

const DataRow = styled.tr`
  height: 9px;

  &:nth-child(7n + 3),
  &:nth-child(7n + 5),
  &:nth-child(8) {
    height: 10px;
  }

  td {
    padding: 0 0 0 5px;
    white-space: nowrap;
    background: ${({ $shaded }) => ($shaded ? "#e5e5e5" : "none")};
  }

  td:nth-child(1) {
    background: #e5e5e5;
    border-right: 1px solid #000;
  }

  td:nth-child(2) {
    padding-left: 4px;
    background: none;
  }

  td:nth-child(4) {
    padding: 0;
  }
`;

const GapRow = styled.tr`
  height: 9px;
`;

const PrintBox = styled.i`
  display: inline-block;
  width: 6px;
  height: 7px;
  margin-right: 2px;
  margin-left: -1px;
  border: 1px solid #000;
  background: ${({ $full }) =>
    $full ? "radial-gradient(circle, #fff 1px, #000 1px)" : "#fff"};
  vertical-align: -1px;
`;

const OptionText = styled.span`
  padding-left: 11px;
`;

const Section = styled.div`
  border-top: 1px solid #000;
`;

const SectionLine = styled.div`
  height: ${({ $height }) => $height}px;
  background: ${({ $shaded }) => ($shaded ? "#e5e5e5" : "#fff")};
`;

const NodeTable = styled.table`
  width: 100%;
  table-layout: fixed;
  border-collapse: separate;
  border-spacing: 0;
  border-top: 1px solid #000;

  th {
    height: 26px;
    padding: 10px 0 0 3px;
    background: #e5e5e5;
    border-right: 1px solid #000;
    border-bottom: 1px solid #000;
    font-weight: normal;
    text-align: center;
  }

  td {
    height: 9px;
    padding: 0 4px;
    border-right: 1px solid #000;
    white-space: nowrap;
  }

  tbody tr:nth-child(7n + 3) td,
  tbody tr:nth-child(7n + 5) td,
  tbody tr:nth-child(7n) td {
    height: 10px;
  }

  tbody tr:nth-child(even) td,
  td:first-child {
    background: #e5e5e5;
  }

  td:nth-child(1),
  td:nth-child(3) {
    text-align: center;
  }

  td:nth-child(5),
  td:nth-child(6),
  td:nth-child(7) {
    text-align: right;
  }
`;

const ScrollTrack = styled.div`
  display: flex;
  flex-direction: column;
  flex: none;
  width: 16px;
  background: #f0f0f0;
`;

const ScrollButton = styled.button`
  display: flex;
  align-items: center;
  justify-content: center;
  flex: none;
  height: 17px;
`;

const Thumb = styled.div`
  flex: ${({ $height }) => ($height ? "none" : 1)};
  height: ${({ $height }) => ($height ? `${$height}px` : "auto")};
  margin: 0 1px 0 0;
  background: #cdcdcd;
`;

const StatusBar = styled.footer`
  display: grid;
  grid-template-columns: 1fr 427px 85px 104px;
  flex: none;
  height: 22px;
  margin-top: 1px;
  background: linear-gradient(#dfe3ea, #bcc2cd 35%, #a8aeb9 45%, #b4bac5);
  border-bottom: 1px solid #6b6f78;
  color: #2c323c;
`;

const StatusCell = styled.span`
  display: flex;
  align-items: center;
  margin: 2px 0;
  padding: 1px 1px 0 4px;
  border-left: 1px solid #8f96a3;

  &:nth-child(2) {
    padding-left: 1px;
  }
`;

const Window = styled.section`
  position: absolute;
  left: ${({ $left }) => $left - 1}px;
  top: ${({ $top }) => $top - 1}px;
  width: ${({ $width }) => $width}px;
  background: #f0f0f0;
  border: 1px solid ${({ $active }) => ($active ? "#5f5f5f" : "#9b9b9b")};
  box-shadow: ${({ $active }) =>
    $active ? "0 6px 22px rgba(0, 0, 0, 0.45)" : "0 2px 10px rgba(0, 0, 0, 0.35)"};
  font-family: ${form};
`;

const WindowBar = styled.header`
  display: flex;
  align-items: center;
  justify-content: space-between;
  height: 26px;
  padding: 0 6px 3px 3px;
  background: #fff;
  font-family: ${ui};
  color: ${({ $active }) => ($active ? "#000" : "#8e8e8e")};
`;

const WindowBody = styled.div`
  display: flex;
  flex-direction: column;
  gap: 10px;
  padding: 7px 8px 8px;
`;

const Columns = styled.div`
  display: grid;
  grid-template-columns: 1fr 1fr;
  gap: 8px;
`;

const Column = styled.div`
  display: flex;
  flex-direction: column;
  gap: 10px;
`;

const GroupBox = styled.section`
  display: flex;
  flex-direction: column;
  flex: ${({ $grow }) => ($grow ? 1 : "none")};
`;

const GroupTitle = styled.h3`
  display: grid;
  grid-template-columns: ${({ $split }) => ($split ? `${$split}px 1fr` : "1fr")};
  height: 16px;
  margin: 0;
  padding-left: 2px;
  background: linear-gradient(#a6a6ee, #a6a6ee) right bottom / 1px 6px no-repeat,
    linear-gradient(225deg, transparent 7px, #dae5fe 7px);
  font-family: ${print};
  font-size: 11px;
  font-weight: normal;
  line-height: 16px;
  color: #00007c;
`;

const GroupBody = styled.div`
  flex: 1;
  background: #f7f7f7;
  border-top: 1px solid #fff;
  border-right: 1px solid #a6a6ee;
  border-bottom: 1px solid #a6a6ee;
`;

const Label = styled.label`
  display: flex;
  align-items: center;
  gap: 2px;
  white-space: nowrap;
`;

const Caption = styled.span`
  ${({ $focused }) =>
    $focused &&
    css`
      outline: 1px dotted #000;
    `}
`;

const Tick = styled.input`
  appearance: none;
  display: flex;
  justify-content: center;
  flex: none;
  width: 13px;
  height: 13px;
  margin: 0;
  border: 1px solid #333;
  background: #fff;

  &:checked::after {
    content: "";
    width: 9px;
    height: 5px;
    margin-top: 1px;
    border-left: 1px solid #222;
    border-bottom: 1px solid #222;
    transform: rotate(-45deg);
  }
`;

const Dot = styled.input`
  appearance: none;
  flex: none;
  width: 13px;
  height: 13px;
  margin: 0;
  border: 1px solid #333;
  border-radius: 50%;
  background: #fff;

  &:checked {
    background: radial-gradient(circle, #222 3px, #fff 4px);
  }
`;

const Field = styled.input`
  flex: 1;
  min-width: 0;
  width: ${({ $short }) => ($short ? "69px" : "100%")};
  max-width: ${({ $name }) => ($name ? "227px" : "none")};
  height: 20px;
  padding: 0 5px 0 4px;
  border: 1px solid #7a7a7a;
  background: ${({ $locked }) => ($locked ? "#f0f0f0" : "#fff")};
  box-shadow: ${({ $locked }) => ($locked ? "inset 0 0 0 1px #fff" : "none")};
  font-family: ${form};
  font-size: 11px;
  color: #000;
  text-align: ${({ $number }) => ($number ? "right" : "left")};

  &:disabled {
    background: #f0f0f0;
    border-color: #cccccc;
    box-shadow: inset 0 0 0 1px #f8f8f8;
    color: #6d6d6d;
  }
`;

const IconButton = styled.button`
  display: flex;
  align-items: center;
  justify-content: center;
  flex: none;
  width: 25px;
  height: 21px;
  border: 1px solid ${({ $muted }) => ($muted ? "#bfbfbf" : "#adadad")};
  background: ${({ $muted }) => ($muted ? "#cccccc" : "#e1e1e1")};
`;

const PushButton = styled.button`
  width: 73px;
  height: 21px;
  border: 1px solid ${({ $primary }) => ($primary ? "#0078d7" : "#adadad")};
  background: ${({ $primary }) => ($primary ? "#e5f1fb" : "#e1e1e1")};
`;

const Footer = styled.footer`
  display: flex;
  gap: 9px;
  margin-top: -3px;
  padding: 11px 1px 0;
  border-top: 1px solid #a0a0a0;
  box-shadow: inset 0 1px 0 #fff;
`;

const SelectRow = styled.div`
  display: flex;
  align-items: center;
  gap: 3px;
  height: 27px;
  padding: 0 3px;
`;

const SelectBox = styled.div`
  position: relative;
  flex: 1;

  select {
    appearance: none;
    width: 100%;
    height: 21px;
    padding: 0 4px;
    border: 1px solid #adadad;
    border-radius: 0;
    background: #e1e1e1;
    font-family: ${form};
    font-size: 11px;
    color: #000;
  }

  svg {
    position: absolute;
    right: 5px;
    top: 8px;
    pointer-events: none;
  }
`;

const CheckList = styled.div`
  display: grid;
  grid-auto-rows: 21px;
  padding: 4px 3px 0;
`;

const Wide = styled.div`
  grid-column: 1 / 3;
  display: flex;
  align-items: flex-end;
`;

const DateFields = styled.div`
  display: grid;
  grid-template-columns: 145px 1fr;
  grid-template-rows: 20px 20px 20px 20px;
  row-gap: 5px;
  padding: 0 3px 4px;

  & > label {
    padding-left: 16px;
  }
`;

const Numbering = styled.div`
  display: grid;
  grid-template-columns: 67px 48px 1fr;
  grid-template-rows: 23px 20px 20px;
  row-gap: 2px;
  align-items: center;
  padding: 0 3px 4px;
`;

const First = styled.span`
  grid-column: 1 / 4;
  padding-left: 60px;
  padding-top: 3px;
`;

const EndCell = styled.div`
  display: flex;
  justify-content: flex-end;
`;

const Continuous = styled.div`
  padding-left: 30px;
`;

const AddressLines = styled.div`
  display: flex;
  flex-direction: column;
  gap: 2px;
  padding: 3px 3px 7px;
`;

const AddressRow = styled.div`
  display: flex;
  gap: 3px;
`;

const RowTools = styled.div`
  display: flex;
  align-items: center;
  gap: 45px;
  width: 187px;
`;

const Alignments = styled.div`
  display: flex;
  gap: 9px;
`;

const LogoCheck = styled.div`
  display: flex;
  height: 28px;
  padding-top: 8px;
`;

const NameRows = styled.div`
  display: flex;
  flex-direction: column;
  gap: 3px;
  padding: 2px 3px 6px;
`;

const NameRow = styled.div`
  display: flex;
  gap: 23px;
`;

const NamePair = styled.div`
  display: flex;
  align-items: center;
  gap: 6px;
  flex: ${({ $fixed }) => ($fixed ? "0 0 247px" : 1)};
`;

const ListArea = styled.div`
  display: flex;
  justify-content: space-between;
  height: 144px;
  padding: 0 1px;
  background: #fff;
  border-top: 1px solid #a0a0a0;
`;

const HeaderList = styled.table`
  width: 218px;
  border-collapse: collapse;
  align-self: flex-start;

  th {
    height: 23px;
    padding: 0 6px;
    border-right: 1px solid #dcdcdc;
    font-weight: normal;
    text-align: left;
  }

  td {
    height: 19px;
    padding: 0 4px;
    background: #0078d7;
    color: #fff;
  }
`;

const SortMark = styled.span`
  position: absolute;
  left: 114px;
  top: 44px;
`;

const ListTools = styled.div`
  display: flex;
  gap: 9px;
  padding: 4px 3px 4px 4px;
`;

const Overlay = styled.svg`
  position: absolute;
  left: -1px;
  top: -1px;
  width: calc(100% + 1px);
  height: calc(100% + 1px);
  pointer-events: none;
`;

const Shadowed = styled.g`
  filter: drop-shadow(3px 6px 3px rgba(0, 0, 0, 0.5));
`;
